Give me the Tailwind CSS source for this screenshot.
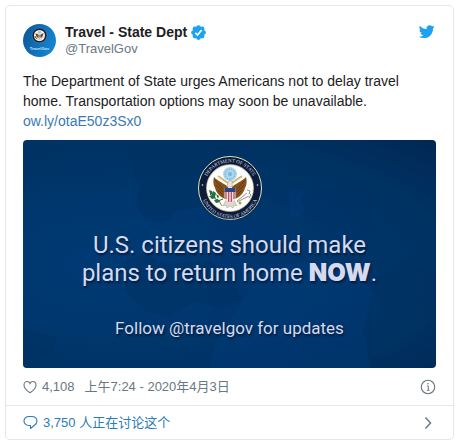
<!DOCTYPE html>
<html lang="zh-CN">

<head>
    <meta charset="UTF-8" />
    <meta name="viewport" content="width=device-width, initial-scale=1.0" />
    <title>Travel - State Dept</title>
    <script src="https://cdn.jsdelivr.net/npm/@tailwindcss/browser@4"></script>
</head>

<body class="bg-white py-[5px] pr-[6px] pl-[5px] font-['Liberation_Sans','Noto_Sans_CJK_SC',sans-serif] text-[#1c2022]">
    <article class="rounded-[5px] border border-[#e1e8ed] bg-white">
        <div class="px-[17px] pt-[17px]">
            <!-- Author -->
            <header class="flex items-start">
                <a href="#" class="flex items-center gap-[9px]">
                    <svg class="size-[33px] shrink-0" viewBox="0 0 33 33" aria-hidden="true">
                        <defs>
                            <linearGradient id="avatar" x1="0" y1="0" x2="1" y2="0.4">
                                <stop offset="0" stop-color="#0b5596" />
                                <stop offset="1" stop-color="#1583d0" />
                            </linearGradient>
                        </defs>
                        <circle cx="16.500" cy="16.500" r="16.500" fill="url(#avatar)" />
                        <use href="#sealArt" transform="translate(9 4) scale(.234)" />
                        <text x="16.500" y="26" text-anchor="middle" font-size="4" font-weight="bold" fill="#c5e2f7">TravelGov</text>
                    </svg>
                    <span class="block">
                        <span class="flex items-center gap-1 text-sm leading-[18px] font-bold">
                            Travel - State Dept
                            <svg class="size-[15px]" viewBox="0 0 24 24" role="img" aria-label="认证账号">
                                <g fill="#1da1f2">
                                    <circle cx="12" cy="12" r="9" />
                                    <circle cx="12" cy="4" r="3.800" />
                                    <circle cx="17.700" cy="6.300" r="3.800" />
                                    <circle cx="20" cy="12" r="3.800" />
                                    <circle cx="17.700" cy="17.700" r="3.800" />
                                    <circle cx="12" cy="20" r="3.800" />
                                    <circle cx="6.300" cy="17.700" r="3.800" />
                                    <circle cx="4" cy="12" r="3.800" />
                                    <circle cx="6.300" cy="6.300" r="3.800" />
                                </g>
                                <path fill="none" stroke="#fff" stroke-width="2.600" d="M7 12.500l3.500 3.500 6.500-8" />
                            </svg>
                        </span>
                        <span class="block text-[13px] leading-4 text-[#697882]">@TravelGov</span>
                    </span>
                </a>
                <a href="#" class="ml-auto" aria-label="Twitter">
                    <svg class="size-[18px]" viewBox="0 0 24 24">
                        <path fill="#1da1f2" transform="translate(1 1) scale(.88)" d="M23.953 4.570a10 10 0 01-2.825.775 4.958 4.958 0 002.163-2.723c-.951.555-2.005.959-3.127 1.184a4.920 4.920 0 00-8.384 4.482C7.690 8.095 4.067 6.130 1.640 3.162a4.822 4.822 0 00-.666 2.475c0 1.710.870 3.213 2.188 4.096a4.904 4.904 0 01-2.228-.616v.060a4.923 4.923 0 003.946 4.827 4.996 4.996 0 01-2.212.085 4.936 4.936 0 004.604 3.417 9.867 9.867 0 01-6.102 2.105c-.390 0-.779-.023-1.170-.067a13.995 13.995 0 007.557 2.209c9.053 0 13.998-7.496 13.998-13.985 0-.210 0-.420-.015-.630A9.935 9.935 0 0024 4.590z" />
                    </svg>
                </a>
            </header>

            <!-- Text -->
            <p class="mt-[14px] text-sm leading-5">
                The Department of State urges Americans not to delay travel home. Transportation options may soon be unavailable.
                <a href="#" class="block text-[#3b79b5]">ow.ly/otaE50z3Sx0</a>
            </p>

            <!-- Media card -->
            <div class="relative mt-[9px] overflow-hidden rounded bg-[radial-gradient(ellipse_at_25%_55%,#003b75_0%,#00376c_45%,#003263_75%,#002853_100%)] px-4 pt-4 pb-[30px] text-center font-[Roboto,sans-serif] text-[#d5daf0]">
                <svg class="absolute inset-0 size-full" viewBox="0 0 413 228" preserveAspectRatio="none" aria-hidden="true">
                    <g fill="#00305f" opacity=".4">
                        <path d="M112 14l16-8 14 6 30-12h70l-24 20-20 18-12 28-30 4-16 14-18-6-10-14 6-16-8-14z" />
                        <path d="M100 122l20-8 26 10 40-4 24 18 10 22-22 8-24-6-28 14-24-4-20-22z" />
                        <path d="M0 188l14 4 20 6-4 14-12 6-10 10H0z" />
                        <path d="M344 140l20-6 16-14 16 8 17 6v58l-14-20-12-14-16 14-8 12-6-24z" />
                    </g>
                    <g fill="#003d7c" opacity=".35">
                        <path d="M264 54l10-6 8 4-5 8 6 8-8 10-10-4 3-10z" />
                        <path d="M210 176l26-40 40-14 54 6 20 24-10 40 8 36H186l6-24z" />
                    </g>
                </svg>
                <div class="relative flex flex-col items-center [text-shadow:1px_2px_2px_#001c3c]">
                    <svg class="size-16" viewBox="0 0 64 64" role="img" aria-label="Department of State, United States of America">
                        <defs>
                            <path id="arcTop" d="M6.500 36a25.800 25.800 0 1 1 51 0" />
                            <path id="arcBottom" d="M2.800 33a29.200 29.200 0 0 0 58.400 0" />
                        </defs>
                        <g id="sealArt">
                            <circle cx="32" cy="32" r="31.500" fill="#0c1b3c" stroke="#e3e6bc" />
                            <circle cx="32" cy="32" r="23.500" fill="#fdfdfb" stroke="#c6c18f" stroke-width=".7" />
                            <circle cx="32" cy="18" r="7" fill="#a9d8ee" />
                            <circle cx="32" cy="18" r="5" fill="none" stroke="#5fa6d4" stroke-dasharray="1 1" />
                            <circle cx="32" cy="18" r="2" fill="#7cb4da" />
                            <!-- Wings -->
                            <g fill="#86501f">
                                <path d="M30 31c-3-3-6-4-9-6-2-1-4-3-5-4-1 4-1 7 1 11 1 4 4 8 8 10l6 2z" />
                                <path d="M34 31c3-3 6-4 9-6 2-1 4-3 5-4 1 4 1 7-1 11-1 4-4 8-8 10l-6 2z" />
                            </g>
                            <path d="M17 24l8 9M18 29l7 7M20 34l5 5M47 24l-8 9M46 29l-7 7M44 34l-5 5" stroke="#5b3213" stroke-width=".8" />
                            <path d="M20 20l10 7M44 20l-10 7" stroke="#d9b466" stroke-width="1.800" />
                            <path d="M29 31l1-5 2-1.500 3 1-1 1.500.500 4z" fill="#e8e4dc" stroke="#8b7b62" stroke-width=".4" />
                            <!-- Tail feathers -->
                            <path d="M28 44l-3 6 3-1 1 3 3-2 3 2 1-3 3 1-3-6z" fill="#dcd8ce" stroke="#a39b8c" stroke-width=".5" />
                            <!-- Shield -->
                            <path d="M26.500 32h11v9c0 3-2.500 5-5.500 6-3-1-5.500-3-5.500-6z" fill="#f5e3e3" />
                            <path d="M28 35v8M30.700 35v11M33.300 35v11M36 35v8" stroke="#b04454" stroke-width="1.200" />
                            <path d="M26.500 32h11v4h-11z" fill="#31447f" />
                            <!-- Olive branch and arrows -->
                            <path d="M25 43l-5 2-8-7" fill="none" stroke="#2c6a3a" />
                            <path d="M21 45l3 5" stroke="#a97a35" />
                            <path d="M11 34l3 1 1 4-3-1zM15 35l3 2-1 4-3-2zM11 40l4-1 3 3-4 1zM18 38l3 2-1 3zM16 44l4-1 2 3-4 1z" fill="#25703f" />
                            <path d="M39 45l10-8M39 46l12-6M49 34l3 1-1 3M51 37l2 2-2 3" fill="none" stroke="#8d8b86" stroke-width=".9" />
                            <circle cx="42" cy="47" r="1.500" fill="#c39a4b" />
                        </g>
                        <g fill="#d9dce0" font-family="Liberation Serif" font-size="5">
                            <text text-anchor="middle"><textPath href="#arcTop" startOffset="50%">DEPARTMENT OF STATE</textPath></text>
                            <text text-anchor="middle"><textPath href="#arcBottom" startOffset="50%">UNITED STATES OF AMERICA</textPath></text>
                        </g>
                        <circle cx="4.500" cy="29" r=".8" fill="#e4e3cf" />
                        <circle cx="59.500" cy="29" r=".8" fill="#e4e3cf" />
                    </svg>
                    <p class="mt-[11px] text-2xl leading-7 whitespace-nowrap">
                        U.S. citizens should make<br>plans to return home <strong class="font-[Inter,sans-serif] font-black">NOW</strong>.
                    </p>
                    <p class="mt-[31px] text-[17px] leading-5">Follow @travelgov for updates</p>
                </div>
            </div>

            <!-- Likes and date -->
            <div class="flex h-[37px] items-center text-[13px] text-[#697882]">
                <a href="#" class="flex items-center gap-[5px]" aria-label="4,108 喜欢">
                    <svg class="size-[14px]" viewBox="0 0 14 14" fill="none" stroke="currentColor" stroke-width="1.100">
                        <path d="M7 12.800C3.500 10.600 1 7.900 1 5c0-2 1.400-3.500 3.100-3.500C5.500 1.500 6.500 2.300 7 3.500c.5-1.200 1.500-2 2.900-2C11.600 1.500 13 3 13 5c0 2.900-2.500 5.600-6 7.800z" />
                    </svg>
                    4,108
                </a>
                <a href="#" class="ml-[10px]"><time datetime="2020-04-03T07:24">上午7:24 - 2020年4月3日</time></a>
                <a href="#" class="ml-auto" aria-label="Twitter Ads 信息和隐私">
                    <svg class="size-4" viewBox="0 0 16 16" fill="none" stroke="currentColor">
                        <circle cx="8" cy="8" r="6.700" stroke-width="1.100" />
                        <path d="M7 7h1.300v4M6.800 11.300h2.700" />
                        <circle cx="8" cy="4.800" r=".8" fill="currentColor" stroke="none" />
                    </svg>
                </a>
            </div>
        </div>

        <!-- Replies -->
        <a href="#" class="flex h-[34px] items-center gap-[5px] border-t border-[#e1e8ed] px-[17px] text-[13px] text-[#2b7bb9]">
            <svg class="size-[15px]" viewBox="0 0 15 15" fill="none" stroke="currentColor" stroke-width="1.100" stroke-linejoin="round">
                <path d="M6 1.500h3c3 0 5 2 5 4.500 0 2-1 3.300-2.800 4.500L7.500 13.500v-3H6C3 10.500 1 8.500 1 6s2-4.500 5-4.500z" />
            </svg>
            3,750 人正在讨论这个
            <svg class="ml-auto size-4 text-[#697882]" viewBox="0 0 16 16" fill="none" stroke="currentColor" stroke-width="1.500">
                <path d="M5.500 2.500l5 5.500-5 5.500" />
            </svg>
        </a>
    </article>
</body>

</html>
